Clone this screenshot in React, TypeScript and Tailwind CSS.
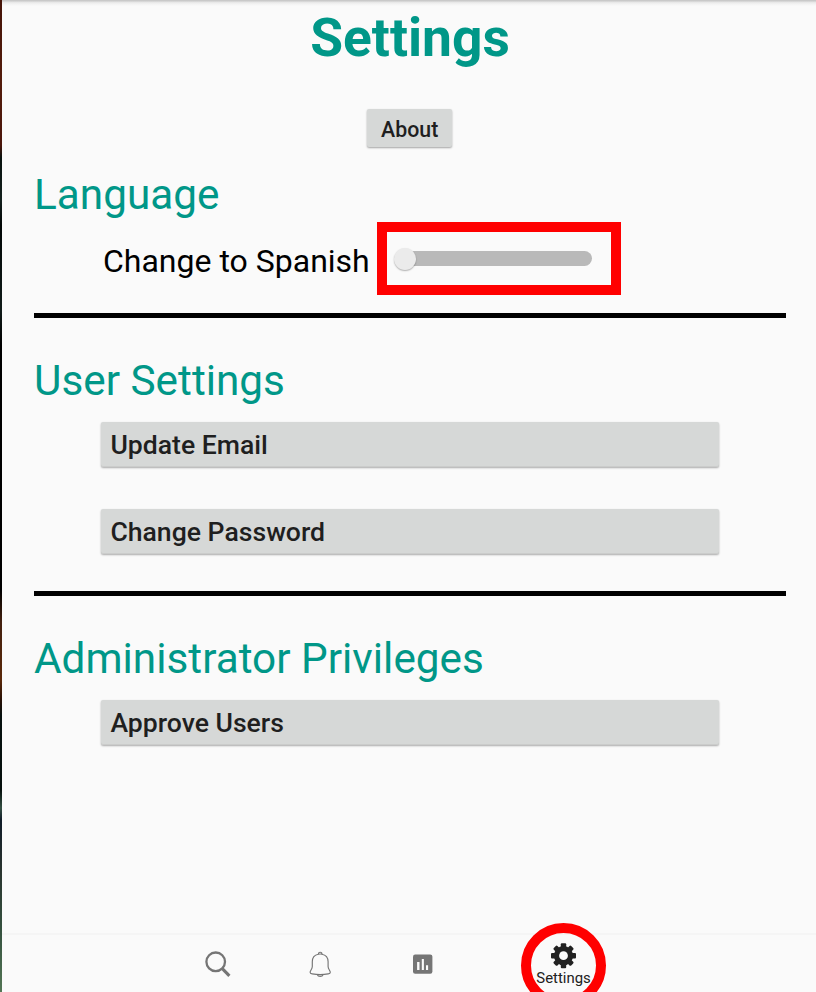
import type { ReactNode } from "react";

function SectionTitle({ children }: { children: ReactNode }) {
  return (
    <h2 className="h-[50px] whitespace-nowrap text-[42.3px] leading-[50px] font-normal text-[#009788]">
      {children}
    </h2>
  );
}

function ActionButton({ children }: { children: ReactNode }) {
  return (
    <button className="ml-[67px] block h-[45px] w-[617.5px] rounded-[2px] bg-[#d6d8d7] pl-[9.4px] text-left text-[26.6px] leading-[46px] font-medium text-[#1f1f1f] shadow-[0_1px_2px_rgba(0,0,0,0.32),inset_0_-1px_0_#cbcccb]">
      {children}
    </button>
  );
}

function Divider() {
  return <div className="h-[5px] w-[752px] bg-black" />;
}

function SearchIcon() {
  return (
    <svg className="h-[28px] w-[28px]" viewBox="0 0 28 28" fill="none" stroke="#757575">
      <circle cx="11.7" cy="10.8" r="9.3" strokeWidth="2.3" />
      <path d="M18.3 17.6 L25.4 24.8" strokeWidth="3.1" />
    </svg>
  );
}

function BellIcon() {
  return (
    <svg className="h-[28px] w-[24px]" viewBox="0 0 24 28" fill="none" stroke="#757575" strokeWidth="1.15" strokeLinejoin="round">
      <path d="M10.4 3.2C6.4 3.8 4.3 6.8 4.3 10.8V15.5C4.3 18.3 2.1 19.4 2.1 21.3C2.1 22.2 2.9 22.7 4.2 22.9C9 23.7 15.4 23.7 20.2 22.9C21.5 22.7 22.3 22.2 22.3 21.3C22.3 19.4 20.1 18.3 20.1 15.5V10.8C20.1 6.8 17.8 3.8 13.8 3.2" />
      <path d="M10.6 3.5C10.2 1.9 10.9 1.2 12.2 1.2C13.5 1.2 14.2 1.9 13.8 3.5M10.1 3.3C11.4 2.9 13 2.9 14.3 3.3" />
      <path d="M9.2 23.5C9.7 24.8 10.7 25.4 12.2 25.4C13.7 25.4 14.7 24.8 15.2 23.5" />
    </svg>
  );
}

function ChartIcon() {
  return (
    <svg className="h-[20px] w-[20px]" viewBox="0 0 20 20">
      <rect x="0" y="0.5" width="19.4" height="19.3" rx="2.2" fill="#757575" />
      <path d="M4.1 8H6.5V16H4.1ZM8.8 5H10.9V16H8.8ZM13 11.3H15.1V16H13Z" fill="#fafafa" />
    </svg>
  );
}

function GearIcon() {
  return (
    <svg className="h-[26px] w-[26px]" viewBox="0 0 26 26" fill="#212121">
      <circle cx="12.5" cy="12.7" r="9.6" />
      <rect x="9.8" y="0.2" width="5.4" height="25" rx="1" />
      <rect x="0" y="10" width="25" height="5.4" rx="1" />
      <rect x="9.9" y="0.4" width="5.2" height="24.6" rx="1.2" transform="rotate(45 12.5 12.7)" />
      <rect x="9.9" y="0.4" width="5.2" height="24.6" rx="1.2" transform="rotate(-45 12.5 12.7)" />
      <circle cx="12.5" cy="12.7" r="4.4" fill="#fafafa" />
    </svg>
  );
}

export default function App() {
  return (
    <div className="flex h-[992px] w-[816px] overflow-hidden bg-[#fafafa] font-['Roboto',sans-serif]">
      <div className="w-[2px] shrink-0 bg-[linear-gradient(to_bottom,#451408_0px,#531c0c_80px,#4b160b_145px,#08120f_158px,#13201d_200px,#020706_225px,#101b19_310px,#000_345px,#000_590px,#43200f_622px,#5a2809_680px,#281106_700px,#07110f_715px,#06100d_790px,#345044_808px,#101c28_820px,#29332f_870px,#35513f_930px,#537655_992px)]" />
      <div className="flex min-w-0 flex-1 flex-col">
        <div className="h-[6px] shrink-0 bg-[linear-gradient(to_bottom,#c8c8c8_0px,#cacaca_1px,#e5e5e5_2px,#f3f3f3_4px,#fafafa_6px)]" />
        <main className="flex h-[927px] shrink-0 flex-col pl-[32px]">
          <h1 className="h-[64px] w-[752px] text-center text-[53.33px] leading-[64px] font-bold text-[#009788]">
            Settings
          </h1>
          <button className="mt-[39px] ml-[333px] h-[38.4px] w-[85.4px] rounded-[2px] bg-[#d6d8d7] pt-px text-[21.33px] leading-[40px] font-medium text-[#1f1f1f] shadow-[0_1px_2px_rgba(0,0,0,0.35)]">
            About
          </button>
          <section className="mt-[22.6px] h-[143px]">
            <SectionTitle>Language</SectionTitle>
            <div className="mt-[2px] flex h-[73px]">
              <span className="w-[343px] pt-[3px] pl-[69px] text-[32px] leading-[73px] whitespace-nowrap text-black">
                Change to Spanish
              </span>
              <div className="flex h-[73px] w-[244px] items-center border-[10px] border-[#ff0000] pt-px pl-[7px]">
                <div className="z-10 h-[22px] w-[22px] rounded-full bg-[#ebebeb] shadow-[0_1px_1.5px_rgba(0,0,0,0.3)]" />
                <div className="-ml-[11px] h-[15px] w-[187px] rounded-full bg-[#b9b9b9]" />
              </div>
            </div>
          </section>
          <Divider />
          <section className="mt-[38px] h-[235px]">
            <SectionTitle>User Settings</SectionTitle>
            <div className="mt-[16px] flex flex-col gap-[42px]">
              <ActionButton>Update Email</ActionButton>
              <ActionButton>Change Password</ActionButton>
            </div>
          </section>
          <Divider />
          <section className="mt-[38px]">
            <SectionTitle>Administrator Privileges</SectionTitle>
            <div className="mt-[16px]">
              <ActionButton>Approve Users</ActionButton>
            </div>
          </section>
        </main>
        <nav className="relative flex h-[59px] shrink-0 border-t-2 border-[#f5f5f5] pl-[165px]">
          <button className="flex w-[102px] justify-center pt-[16px]" aria-label="Search">
            <SearchIcon />
          </button>
          <button className="flex w-[102px] justify-center pt-[16px]" aria-label="Notifications">
            <BellIcon />
          </button>
          <button className="flex w-[103px] justify-center pt-[19px]" aria-label="Reports">
            <ChartIcon />
          </button>
          <button className="ml-[38px] flex w-[103px] flex-col items-center pt-[7.5px] text-[#212121]">
            <GearIcon />
            <span className="-mt-[0.5px] text-[14.9px] leading-[20px]">Settings</span>
          </button>
          <div className="absolute -top-[12px] left-[519px] h-[85px] w-[85px] rounded-full border-[10px] border-[#ff0000]" />
        </nav>
      </div>
    </div>
  );
}
